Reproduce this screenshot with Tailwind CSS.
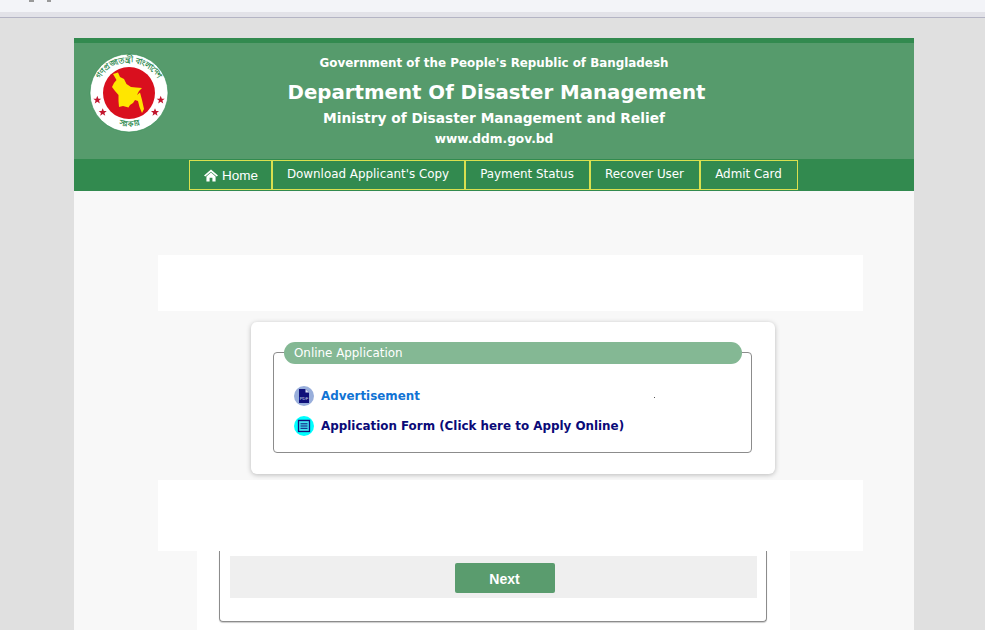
<!DOCTYPE html>
<html lang="en">
<head>
    <meta charset="UTF-8">
    <meta name="viewport" content="width=device-width, initial-scale=1.0">
    <title>Department Of Disaster Management</title>
    <script src="https://cdn.jsdelivr.net/npm/@tailwindcss/browser@4"></script>
</head>
<body class="h-[630px] overflow-hidden bg-[#e0e0e0] font-['DejaVu_Sans',Verdana,sans-serif]">
    <!-- browser strip -->
    <div class="flex h-[12px] gap-[13px] bg-[#f3f4f8] pl-[29px]">
        <span class="h-[2px] w-[5px] bg-[#999]"></span><span class="h-[2px] w-[4px] bg-[#999]"></span>
    </div>
    <div class="h-[5px] bg-[#e2e2e8]"></div>
    <div class="h-[1px] bg-[#b4b4c4]"></div>

    <div class="mt-[20px] ml-[74px] w-[840px]">
        <!-- header -->
        <header class="relative h-[121px] border-t-[5px] border-[#328a4f] bg-[#569b6c] text-center font-bold text-white">
            <svg class="absolute left-[15px] top-[10px]" width="80" height="80" viewBox="0 0 80 80">
                <defs>
                    <path id="ringTop" d="M6.5 43 A33.5 33.5 0 1 1 73.5 43"/>
                    <path id="ringBottom" d="M20 67 A34 34 0 0 0 60 67"/>
                </defs>
                <circle cx="40" cy="40" r="39" fill="#fff" stroke="#2f8a50" stroke-width="0.6"/>
                <circle cx="40" cy="40" r="26" fill="#d90f1e"/>
                <polygon fill="#ffe600" points="24,21 29,19.5 31,24 35,26 37.5,31 42,34 47,34.5 53,35 50,38 48,42 51,39.5 53,47 55,56 53,60 50.5,54 49,48 46,47 44,50 41,52 39.5,54.5 34,53 30,54 29.5,48 29.5,42 26,38 23,34 25,30 27.5,27"/>
                <!-- lettering ring -->
                <g fill="#2f8a50" font-family="'Noto Sans','DejaVu Sans',sans-serif" font-size="8">
                    <text><textPath href="#ringTop" startOffset="50%" text-anchor="middle">গণপ্রজাতন্ত্রী বাংলাদেশ</textPath></text>
                    <text><textPath href="#ringBottom" startOffset="50%" text-anchor="middle">সরকার</textPath></text>
                </g>
                <g fill="#c2162e">
                    <polygon transform="translate(8.3 47) scale(1.15)" points="0,-3.6 1,-1.1 3.5,-1.1 1.5,0.5 2.2,3 0,1.5 -2.2,3 -1.5,0.5 -3.5,-1.1 -1,-1.1"/>
                    <polygon transform="translate(71.7 47) scale(1.15)" points="0,-3.6 1,-1.1 3.5,-1.1 1.5,0.5 2.2,3 0,1.5 -2.2,3 -1.5,0.5 -3.5,-1.1 -1,-1.1"/>
                    <polygon transform="translate(13.7 59.3) scale(1.15)" points="0,-3.6 1,-1.1 3.5,-1.1 1.5,0.5 2.2,3 0,1.5 -2.2,3 -1.5,0.5 -3.5,-1.1 -1,-1.1"/>
                    <polygon transform="translate(66 59.3) scale(1.15)" points="0,-3.6 1,-1.1 3.5,-1.1 1.5,0.5 2.2,3 0,1.5 -2.2,3 -1.5,0.5 -3.5,-1.1 -1,-1.1"/>
                </g>
            </svg>
            <div class="pt-[12px]">
                <p class="text-[11.9px] leading-[16px]">Government of the People's Republic of Bangladesh</p>
                <h1 class="mt-[8px] pl-[5px] text-[19.75px] leading-[28px]">Department Of Disaster Management</h1>
                <p class="mt-[2px] text-[13.75px] leading-[18px]">Ministry of Disaster Management and Relief</p>
                <p class="mt-[3px] text-[12.2px] leading-[18px]">www.ddm.gov.bd</p>
            </div>
        </header>

        <!-- nav -->
        <nav class="flex h-[32px] justify-center bg-[#328a4f] pt-[1px] pr-[2px] text-[11.9px] text-white">
            <a href="#" class="flex h-[30px] w-[83px] items-center justify-center gap-[4px] border border-[#d9e04f] pl-[2px]">
                <svg width="14" height="13" viewBox="0 0 15 13" fill="#fff" class="mt-[1px]"><path d="M7.5 0 L15 6.6 L13.6 7.6 L7.5 2.4 L1.4 7.6 L0 6.6 Z M2.6 7.6 L7.5 3.4 L12.4 7.6 V13 H9 V9 H6 V13 H2.6 Z"/></svg>
                <span class="mt-[2px] font-['Liberation_Sans',sans-serif] text-[13.5px]">Home</span>
            </a>
            <a href="#" class="flex h-[30px] w-[193px] items-center justify-center border border-[#d9e04f] pb-[1px]">Download Applicant's Copy</a>
            <a href="#" class="flex h-[30px] w-[125px] items-center justify-center border border-[#d9e04f] pb-[1px]">Payment Status</a>
            <a href="#" class="flex h-[30px] w-[110px] items-center justify-center border border-[#d9e04f] pb-[1px]">Recover User</a>
            <a href="#" class="flex h-[30px] w-[98px] items-center justify-center border border-[#d9e04f] pb-[1px]">Admit Card</a>
        </nav>

        <!-- content -->
        <main class="h-[439px] bg-[#f8f8f8] pt-[64px]">
            <div class="ml-[84px] h-[56px] w-[705px] bg-white"></div>

            <section class="mt-[11px] ml-[177px] h-[152px] w-[524px] rounded-md bg-white pt-[20px] pl-[22px] shadow-[0_1px_5px_rgba(0,0,0,0.25)]">
                <div class="relative h-[111px] w-[479px]">
                    <div class="absolute inset-x-0 bottom-0 top-[10px] rounded-[4px] border border-[#8c8c8c]"></div>
                    <div class="absolute left-[11px] top-0 h-[22px] w-[458px] rounded-full bg-[#84b894] pl-[10px] text-[11.9px] leading-[22px] text-white">Online Application</div>
                    <ul class="relative flex flex-col gap-[10px] pt-[44px] pl-[21px] text-[11.9px] font-bold">
                        <li class="flex h-[20px] items-center gap-[7px] text-[#1173d4]">
                            <svg width="20" height="20" viewBox="0 0 20 20">
                                <circle cx="10" cy="10" r="10" fill="#98aedb"/>
                                <path d="M5 3 H11.5 L15 6.5 V17 H5 Z" fill="#10107a"/>
                                <path d="M11.5 3 V6.5 H15 Z" fill="#dfe6f6"/>
                                <text x="10" y="13.5" text-anchor="middle" font-size="4.2" font-weight="400" fill="#dfe6f6" font-family="'Liberation Sans',sans-serif">PDF</text>
                            </svg>
                            <a href="#" class="mt-[1px]">Advertisement</a>
                        </li>
                        <li class="flex h-[20px] items-center gap-[7px] text-[#0a0a78]">
                            <svg width="20" height="20" viewBox="0 0 20 20">
                                <circle cx="10" cy="10" r="10" fill="#0ff"/>
                                <rect x="4.5" y="4.5" width="11" height="11" fill="#3fe0f0" stroke="#10107a" stroke-width="1.3"/>
                                <path d="M5 3.8 V5 M7 3.8 V5 M9 3.8 V5 M11 3.8 V5 M13 3.8 V5 M15 3.8 V5" stroke="#10107a" stroke-width="1"/>
                                <path d="M6.5 7.8 H13.5 M6.5 10 H13.5 M6.5 12.3 H13.5" stroke="#10107a" stroke-width="1" fill="none"/>
                            </svg>
                            <a href="#" class="mt-[1px]">Application Form (Click here to Apply Online)</a>
                        </li>
                    </ul>
                    <span class="absolute left-[381px] top-[55px] h-[1px] w-[1px] bg-[#555]"></span>
                </div>
            </section>

            <div class="mt-[6px] ml-[84px] h-[71px] w-[705px] bg-white"></div>

            <!-- lower card, top hidden behind the strip -->
            <section class="ml-[123px] h-[79px] w-[593px] bg-white pr-[23px] pl-[22px]">
                <div class="h-[71px] rounded-b-[4px] border-x border-b border-[#8c8c8c] pr-[9px] pl-[10px] pt-[5px] shadow-[0_1px_1px_rgba(0,0,0,0.2)]">
                    <div class="flex h-[42px] items-center justify-center bg-[#efefef]">
                        <button class="mt-[2px] ml-[22px] h-[30px] w-[100px] rounded-[2px] bg-[#5a9c6e] pt-[2px] font-['Liberation_Sans',sans-serif] text-[14px] font-bold text-white">Next</button>
                    </div>
                </div>
            </section>
        </main>
    </div>
</body>
</html>
